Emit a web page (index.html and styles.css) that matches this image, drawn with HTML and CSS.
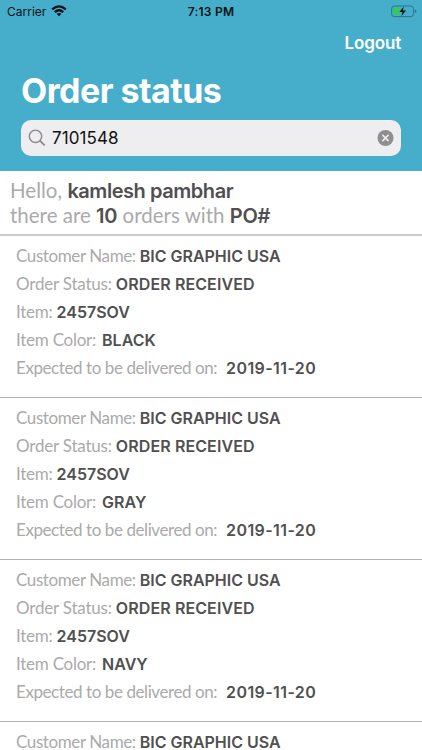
FILE: index.html
```html
<!DOCTYPE html>
<html lang="en">
<head>
  <title>Order status</title>
  <meta charset="UTF-8">
  <meta name="viewport" content="width=device-width, initial-scale=1">
  <link rel="stylesheet" href="styles.css">
</head>
<body>
  <header class="header">
    <div class="status-bar">
      <div class="carrier">
        <span>Carrier</span>
        <svg class="wifi" width="16" height="12" viewBox="0 0 16 12">
          <path d="M1.2 4.4Q8-1.8 14.8 4.4M3.8 7.1Q8 3.4 12.2 7.1" fill="none" stroke="#071216" stroke-width="2.2"/>
          <path d="M5.6 8.8Q8 7 10.4 8.8L8 11.2Z" fill="#071216"/>
        </svg>
      </div>
      <div class="time">7:13 PM</div>
      <svg class="battery" width="26" height="13" viewBox="0 0 26 13">
        <rect x=".6" y="1" width="22" height="10.6" rx="2.8" fill="none" stroke="#2c7488"/>
        <path d="M3.6 2.5H9.8L7.4 7H9.6L8.7 10H3.6Q2.1 10 2.1 8.5V4Q2.1 2.5 3.6 2.5Z" fill="#36c759"/>
        <path d="M12.8 1.6L8.3 7H11.4L10.4 11.2L15 5.6H11.8Z" fill="#071216"/>
        <path d="M24 4.5Q25.4 5 25.4 6.3T24 8.1Z" fill="#2c7488"/>
      </svg>
    </div>
    <a class="logout">Logout</a>
    <h1>Order status</h1>
    <div class="search-box">
      <svg class="search-icon" width="18" height="18" viewBox="0 0 18 18" fill="none" stroke="#8a8a8e" stroke-width="1.4">
        <circle cx="7.5" cy="7.3" r="6.2"/>
        <path d="M11.9 11.7L16.6 16.4" stroke-width="1.8"/>
      </svg>
      <span class="search-text">7101548</span>
      <svg class="clear-icon" width="17" height="17" viewBox="0 0 17 17">
        <circle cx="8.5" cy="8" r="8" fill="#8e8e93"/>
        <path d="M5.4 4.9L11.6 11.1M11.6 4.9L5.4 11.1" stroke="#eeeef0" stroke-width="1.5"/>
      </svg>
    </div>
  </header>

  <div class="greeting">
    <div class="hello">Hello, <b>kamlesh pambhar</b></div>
    <div class="summary">there are <b>10</b> orders with <b>PO#</b></div>
  </div>

  <div class="order-list">
    <div class="order">
      <div class="row customer"><span>Customer Name:</span><b>BIC GRAPHIC USA</b></div>
      <div class="row state"><span>Order Status:</span><b>ORDER RECEIVED</b></div>
      <div class="row item"><span>Item:</span><b>2457SOV</b></div>
      <div class="row color"><span>Item Color:</span><b>BLACK</b></div>
      <div class="row delivery"><span>Expected to be delivered on:</span><b>2019-11-20</b></div>
    </div>
    <div class="order">
      <div class="row customer"><span>Customer Name:</span><b>BIC GRAPHIC USA</b></div>
      <div class="row state"><span>Order Status:</span><b>ORDER RECEIVED</b></div>
      <div class="row item"><span>Item:</span><b>2457SOV</b></div>
      <div class="row color"><span>Item Color:</span><b>GRAY</b></div>
      <div class="row delivery"><span>Expected to be delivered on:</span><b>2019-11-20</b></div>
    </div>
    <div class="order">
      <div class="row customer"><span>Customer Name:</span><b>BIC GRAPHIC USA</b></div>
      <div class="row state"><span>Order Status:</span><b>ORDER RECEIVED</b></div>
      <div class="row item"><span>Item:</span><b>2457SOV</b></div>
      <div class="row color"><span>Item Color:</span><b>NAVY</b></div>
      <div class="row delivery"><span>Expected to be delivered on:</span><b>2019-11-20</b></div>
    </div>
    <div class="order last">
      <div class="row customer"><span>Customer Name:</span><b>BIC GRAPHIC USA</b></div>
    </div>
  </div>
</body>
</html>
```
FILE: styles.css
```css
* {
  box-sizing: border-box;
}

body {
  margin: 0;
  height: 750px;
  overflow: hidden;
  background-color: #fff;
  font-family: Inter, "Liberation Sans", sans-serif;
  color: #505050;
}

.header {
  height: 171px;
  padding: 0 21px;
  background-color: #46adca;
  color: #fff;
}

.status-bar {
  display: grid;
  grid-template-columns: 1fr auto 1fr;
  align-items: center;
  height: 22px;
  margin: 0 -14px;
  color: #071216;
  font-size: 12px;
}

.carrier {
  display: flex;
  align-items: center;
  gap: 5px;
}

.time {
  font-weight: 600;
  letter-spacing: 0.25px;
}

.battery {
  justify-self: end;
  margin-right: -2px;
}

.logout {
  display: block;
  height: 42px;
  line-height: 42px;
  text-align: right;
  font-size: 17px;
  font-weight: 600;
  letter-spacing: -0.15px;
}

h1 {
  margin: 0;
  height: 56px;
  line-height: 53px;
  font-size: 34px;
  font-weight: 700;
  letter-spacing: -0.55px;
}

.search-box {
  display: flex;
  align-items: center;
  height: 36px;
  padding: 0 7px;
  border-radius: 10px;
  background-color: #eeeef0;
}

.search-text {
  flex: 1;
  margin-left: 6px;
  color: #111;
  font-size: 17px;
  letter-spacing: 0.1px;
}

.greeting {
  height: 65px;
  padding: 7px 10px 0;
  border-bottom: 2px solid #cbcbcb;
  font-family: Lato, sans-serif;
  font-size: 20.5px;
  line-height: 25px;
  color: #aaa;
}

.greeting div {
  height: 25px;
}

b {
  font-family: Inter, "Liberation Sans", sans-serif;
  font-weight: 600;
  color: #505050;
}

.greeting b {
  font-size: 20px;
  line-height: 1;
  letter-spacing: -0.2px;
}

.hello b {
  letter-spacing: -0.45px;
}

.order {
  height: 162px;
  padding: 6px 16px 0;
  border-bottom: 1px solid #b2b2b2;
}

.order.last {
  height: auto;
  border-bottom: none;
}

.row {
  display: flex;
  align-items: baseline;
  gap: 4px;
  height: 28.1px;
  line-height: 28px;
  font-family: Lato, sans-serif;
  font-size: 17px;
  letter-spacing: -0.4px;
  color: #aaa;
  white-space: nowrap;
}

.row b {
  font-size: 16px;
  letter-spacing: 0;
}

.state {
  letter-spacing: -0.2px;
}

.state b {
  letter-spacing: 0.1px;
}

.item,
.color {
  letter-spacing: -0.25px;
}

.color {
  gap: 6px;
}

.delivery {
  gap: 9px;
  letter-spacing: -0.42px;
}

.delivery b {
  letter-spacing: 0.4px;
}
```
